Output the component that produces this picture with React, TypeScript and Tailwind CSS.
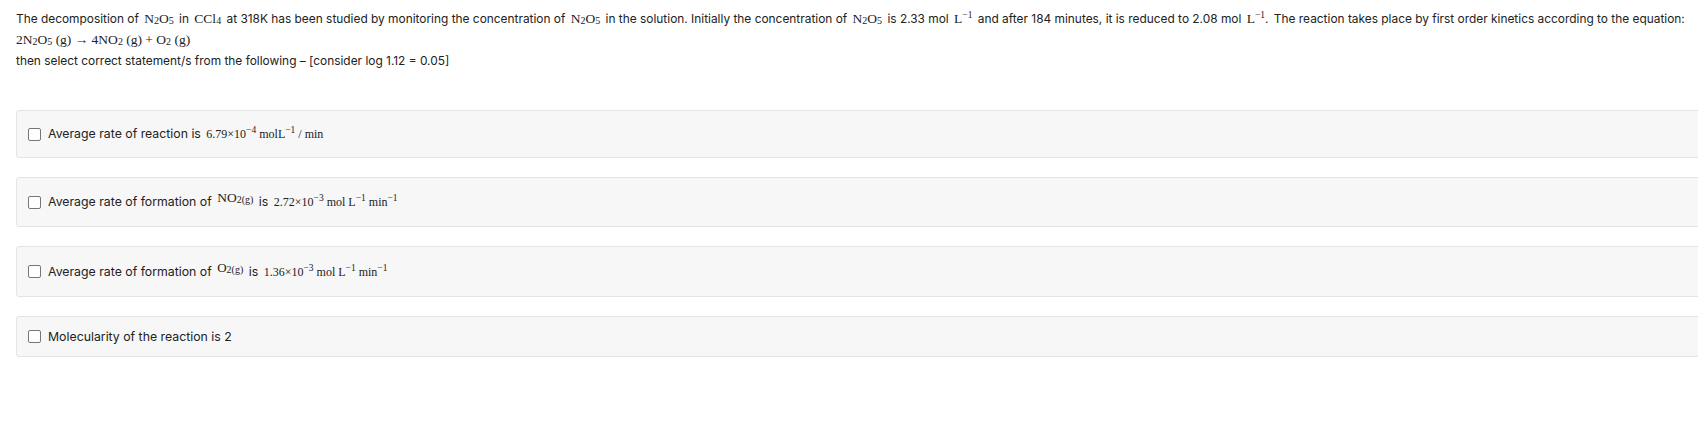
import React from "react";

const serif = "font-['Liberation_Serif','Times_New_Roman',serif]";

const Chem: React.FC<{ children: React.ReactNode; className?: string }> = ({ children, className = "" }) => (
  <span className={`${serif} text-[13.5px] mx-[2px] ${className}`}>{children}</span>
);

// smaller formula used inside the options
const OptChem: React.FC<{ children: React.ReactNode; className?: string }> = ({ children, className = "" }) => (
  <span className={`${serif} text-[12px] mx-[2px] ${className}`}>{children}</span>
);

const Sub: React.FC<{ children: React.ReactNode }> = ({ children }) => (
  <sub className="text-[10px] relative top-[1px]">{children}</sub>
);

const Sup: React.FC<{ children: React.ReactNode }> = ({ children }) => (
  <sup className="text-[9.5px]">{children}</sup>
);

const N2O5 = () => (
  <Chem>
    N<Sub>2</Sub>O<Sub>5</Sub>
  </Chem>
);

const Checkbox = () => (
  <span className="inline-block w-[13px] h-[13px] border border-[#767676] rounded-[2px] bg-white shrink-0" />
);

const Option: React.FC<{ children: React.ReactNode; h: string }> = ({ children, h }) => (
  <div className={`w-[1720px] ${h} bg-[#f7f7f7] border border-[#e4e4e4] rounded-[3px] flex items-center gap-[7px] pl-[11px]`}>
    <Checkbox />
    <div className="text-[12.3px] text-[#222] leading-5">{children}</div>
  </div>
);

export default function App() {
  return (
    <div className="w-full min-h-[426px] bg-white overflow-hidden font-['Inter','Noto_Sans',sans-serif] text-[#222]">
      <div className="pt-[8px] pl-4 text-[11.9px] leading-[21px]">
        <p className="whitespace-nowrap">
          The decomposition of <N2O5 /> in{" "}
          <Chem>
            CCl<Sub>4</Sub>
          </Chem>{" "}
          at 318K has been studied by monitoring the concentration of <N2O5 /> in the solution. Initially the
          concentration of <N2O5 /> is 2.33 mol{" "}
          <Chem className="mx-0">
            L<Sup>−1</Sup>
          </Chem>{" "}
          and after 184 minutes, it is reduced to 2.08 mol{" "}
          <Chem className="mx-0">
            L<Sup>−1</Sup>.
          </Chem>{" "}
          The reaction takes place by first order kinetics according to the equation:
        </p>
        <p className={`${serif} text-[13.5px]`}>
          2N<Sub>2</Sub>O<Sub>5</Sub> (g) → 4NO<Sub>2</Sub> (g) + O<Sub>2</Sub> (g)
        </p>
        <p>then select correct statement/s from the following – [consider log 1.12 = 0.05]</p>
      </div>

      <div className="pl-4 mt-[39px] flex flex-col gap-[19px]">
        <Option h="h-[48px]">
          Average rate of reaction is{" "}
          <OptChem>
            6.79×10<Sup>−4</Sup> molL<Sup>−1</Sup> / min
          </OptChem>
        </Option>
        <Option h="h-[50px]">
          Average rate of formation of{" "}
          <OptChem className="relative -top-[4px] text-[13.5px]">
            NO<Sub>2(g)</Sub>
          </OptChem>{" "}
          is{" "}
          <OptChem className="text-[12.5px]">
            2.72×10<Sup>−3</Sup> mol L<Sup>−1</Sup> min<Sup>−1</Sup>
          </OptChem>
        </Option>
        <Option h="h-[51px]">
          Average rate of formation of{" "}
          <OptChem className="relative -top-[4px] text-[13px]">
            O<Sub>2(g)</Sub>
          </OptChem>{" "}
          is{" "}
          <OptChem className="text-[12.5px]">
            1.36×10<Sup>−3</Sup> mol L<Sup>−1</Sup> min<Sup>−1</Sup>
          </OptChem>
        </Option>
        <Option h="h-[41px]">Molecularity of the reaction is 2</Option>
      </div>
    </div>
  );
}
